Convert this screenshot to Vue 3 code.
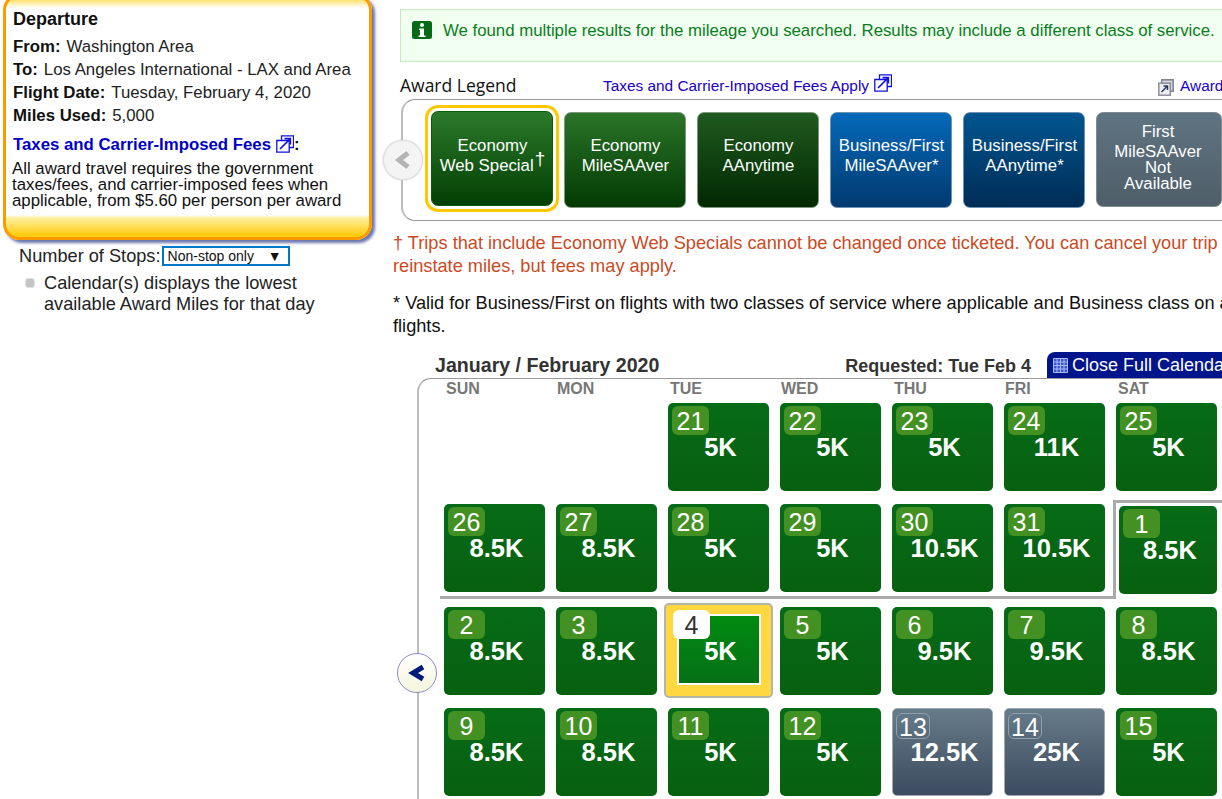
<script setup>
const days = ['SUN', 'MON', 'TUE', 'WED', 'THU', 'FRI', 'SAT']
const weeks = [
  [null, null, ['21', '5K'], ['22', '5K'], ['23', '5K'], ['24', '11K'], ['25', '5K']],
  [['26', '8.5K'], ['27', '8.5K'], ['28', '5K'], ['29', '5K'], ['30', '10.5K'], ['31', '10.5K'], ['1', '8.5K', 'shift']],
  [['2', '8.5K'], ['3', '8.5K'], ['4', '5K', 'sel'], ['5', '5K'], ['6', '9.5K'], ['7', '9.5K'], ['8', '8.5K']],
  [['9', '8.5K'], ['10', '8.5K'], ['11', '5K'], ['12', '5K'], ['13', '12.5K', 'na'], ['14', '25K', 'na'], ['15', '5K']]
]
const tiles = [
  { cls: 't1', a: 'Economy', b: 'Web Special', dag: true },
  { cls: 't2', a: 'Economy', b: 'MileSAAver' },
  { cls: 't3', a: 'Economy', b: 'AAnytime' },
  { cls: 't4', a: 'Business/First', b: 'MileSAAver*' },
  { cls: 't5', a: 'Business/First', b: 'AAnytime*' }
]
</script>

<template>
  <div class="page">
    <aside class="side">
      <section class="card">
        <h2 class="card-title">Departure</h2>
        <p class="row"><b>From:</b><span>Washington Area</span></p>
        <p class="row"><b>To:</b><span>Los Angeles International - LAX and Area</span></p>
        <p class="row"><b>Flight Date:</b><span>Tuesday, February 4, 2020</span></p>
        <p class="row"><b>Miles Used:</b><span>5,000</span></p>
        <p class="fees-link">
          <a>Taxes and Carrier-Imposed Fees</a>
          <svg class="ext" viewBox="0 0 18 18" width="18" height="18"><path d="M5.5 5V.8h12v11.7h-4.2M.8 5.5h12.4v11.7H.8z" fill="none" stroke="#1010e0" stroke-width="1.3"/><path d="M4 14 14 4M8.5 3.7h5.8v5.8" fill="none" stroke="#1010e0" stroke-width="1.7"/></svg><b>:</b>
        </p>
        <p class="fees-text">All award travel requires the government taxes/fees, and carrier-imposed fees when applicable, from $5.60 per person per award</p>
      </section>
      <div class="stops">
        <span>Number of Stops:</span>
        <div class="select"><span>Non-stop only</span><i>▼</i></div>
      </div>
      <div class="note">
        <span class="bullet"></span>
        <p>Calendar(s) displays the lowest available Award Miles for that day</p>
      </div>
    </aside>

    <main class="main">
      <div class="alert">
        <svg class="info" viewBox="0 0 20 18" width="20" height="18"><rect width="20" height="18" rx="2.5" fill="#056b16"/><circle cx="10" cy="4" r="2" fill="#fff"/><path d="M7 7.5h5v7h1.5V16h-7v-1.5H8V9H7z" fill="#fff"/></svg>
        <span>We found multiple results for the mileage you searched. Results may include a different class of service.</span>
      </div>

      <div class="legend-head">
        <h3>Award Legend</h3>
        <a class="tax-link">Taxes and Carrier-Imposed Fees Apply</a>
        <svg class="ext ext2" viewBox="0 0 18 18" width="18" height="18"><path d="M5.5 5V.8h12v11.7h-4.2M.8 5.5h12.4v11.7H.8z" fill="none" stroke="#1010e0" stroke-width="1.3"/><path d="M4 14 14 4M8.5 3.7h5.8v5.8" fill="none" stroke="#1010e0" stroke-width="1.7"/></svg>
        <svg class="doc" viewBox="0 0 16 17" width="16" height="17"><rect x="3.7" y=".8" width="11.5" height="11.5" fill="#cfd3db" stroke="#7c828c" stroke-width="1.5"/><rect x=".8" y="4.2" width="11.5" height="12" fill="#eceef2" stroke="#8a8f99" stroke-width="1.5"/><path d="M3.5 13 9 7.5M5.5 7H9.5V11" fill="none" stroke="#2c3a5c" stroke-width="1.5"/></svg>
        <a class="award-link">Award Chart</a>
      </div>

      <div class="legend">
        <button class="round grey-round" aria-label="Previous">
          <svg viewBox="0 0 18 20" width="18" height="20"><path d="M14 3 5 10l9 7" fill="none" stroke="#b4b4b4" stroke-width="5"/></svg>
        </button>
        <div v-for="t in tiles" :key="t.cls + t.b" class="tile" :class="t.cls">
          <span>{{ t.a }}</span>
          <span>{{ t.b }}<sup v-if="t.dag">†</sup></span>
        </div>
        <div class="tile t6">
          <span>First</span>
          <span>MileSAAver</span>
          <span class="tight first-tight">Not</span>
          <span class="tight">Available</span>
        </div>
      </div>

      <p class="warn">† Trips that include Economy Web Specials cannot be changed once ticketed. You can cancel your trip to reinstate miles, but fees may apply.</p>
      <p class="valid">* Valid for Business/First on flights with two classes of service where applicable and Business class on all flights.</p>

      <div class="cal-head">
        <h3>January / February 2020</h3>
        <strong>Requested: Tue Feb 4</strong>
        <div class="close-cal">
          <svg viewBox="0 0 15 15" width="15" height="15"><path d="M.5.5h14v14H.5zM4 .5v14M7.5.5v14M11 .5v14M.5 4h14M.5 7.5h14M.5 11h14" fill="#3a55c8" stroke="#a8bcf4"/></svg>
          <span>Close Full Calendar</span>
        </div>
      </div>

      <div class="cal">
        <button class="round blue-round" aria-label="Previous month">
          <svg viewBox="0 0 18 20" width="18" height="20"><path d="M15 4 5 10l10 6" fill="none" stroke="#001a7a" stroke-width="5"/></svg>
        </button>
        <div class="month-a"></div>
        <div class="month-b"></div>
        <div class="dow"><span v-for="d in days" :key="d">{{ d }}</span></div>
        <div v-for="(w, i) in weeks" :key="i" class="week">
          <template v-for="(c, j) in w" :key="j">
            <div v-if="c" class="cell" :class="c[2]">
              <span class="num">{{ c[0] }}</span>
              <span class="miles">{{ c[1] }}</span>
            </div>
            <div v-else class="empty"></div>
          </template>
        </div>
      </div>
    </main>
  </div>
</template>

<style scoped>
.page { display: flex; width: 1222px; height: 799px; overflow: hidden; background: #fff; font-family: "Liberation Sans", Arial, sans-serif; font-size: 16.8px; color: #222; }
p, h2, h3 { margin: 0; }
.side { flex: none; width: 393px; }
.card { box-sizing: border-box; width: 369px; height: 246px; margin: -6px 0 0 3px; padding: 12px 10px 0 7px; border: 3px solid #ff9900; border-radius: 16px; box-shadow: 3px 3px 3px #6c76ae; background: linear-gradient(#ffd83a 0, #fff 11px, #fff 218px, #fff0a0 221px, #ffcc10 238px); }
.card-title { font-size: 18px; font-weight: bold; line-height: 20px; color: #111; margin-bottom: 6px; }
.row { display: flex; gap: 6px; line-height: 23px; color: #222; white-space: nowrap; }
.row b { color: #111; }
.fees-link { display: flex; align-items: center; margin-top: 6px; height: 24px; color: #111; font-weight: bold; white-space: nowrap; }
.fees-link a { color: #0000c8; }
.fees-link .ext { margin: -3px 0 0 5px; }
.fees-text { margin: 4px 0 0 -1px; line-height: 16px; color: #111; width: 345px; }
.stops { display: flex; align-items: center; gap: 1px; margin: 5px 0 0 19px; height: 22px; font-size: 18.2px; white-space: nowrap; }
.select { box-sizing: border-box; display: flex; justify-content: space-between; align-items: center; width: 128px; height: 20px; padding: 0 6px 0 4px; border: 2px solid #0078c8; font-size: 14px; color: #111; }
.select i { font-style: normal; font-size: 14px; }
.note { display: flex; gap: 9px; margin: 6px 0 0 25px; font-size: 18.2px; line-height: 21px; }
.bullet { flex: none; width: 10px; height: 10px; margin-top: 5px; border-radius: 3px; background: #c4c4c4; border: 1px solid #e0e0e0; box-sizing: border-box; }
.note p { width: 290px; }

.main { flex: none; width: 860px; }
.alert { box-sizing: border-box; display: flex; gap: 11px; align-items: flex-start; width: 860px; height: 53px; margin: 9px 0 0 7px; padding: 11px 0 0 11px; background: #f0fff0; border: 1px solid #c7e9c0; color: #0a7d22; white-space: nowrap; }
.alert span { line-height: 20px; }
.legend-head { display: flex; align-items: flex-end; height: 36px; margin: 0 0 1px 7px; white-space: nowrap; }
.legend-head > * { flex: none; }
.legend-head h3 { width: 203px; font: 400 17.5px/26px "Open Sans", sans-serif; color: #111; }
.tax-link { font-size: 15.4px; line-height: 24px; color: #1a00c8; }
.ext2 { margin: 0 0 6px 5px; }
.doc { margin: 0 0 2px 266px; }
.award-link { margin-left: 6px; font-size: 15.4px; line-height: 24px; color: #1a00c8; }
.legend { box-sizing: border-box; position: relative; display: flex; gap: 11px; align-items: flex-start; width: 860px; height: 122px; margin-left: 8px; padding: 12px 0 0 28px; border: 1px solid #999; border-left: 2px solid #bbb; border-radius: 14px 0 0 14px; }
.tile { box-sizing: border-box; flex: none; display: flex; flex-direction: column; align-items: center; width: 122px; height: 96px; padding: 23px 0 0 1px; border-radius: 7px; border: 1px solid #7d967d; color: #fff; text-align: center; line-height: 20px; }
.t1 { margin-top: -1px; height: 95px; padding-top: 24px; border-color: #0c5e0c; background: linear-gradient(#2b7a2b, #033f03); box-shadow: 0 0 0 3px #fff, 0 0 0 6px #ffc800; border-radius: 7px; }
.t2 { background: linear-gradient(#2a7428, #033a03); }
.t3 { background: linear-gradient(#1f5a1f, #022802); }
.t4 { background: linear-gradient(#0469b9, #013a70); border-color: #6f93b4; }
.t5 { background: linear-gradient(#00558f, #002d56); border-color: #6f93b4; }
.t6 { width: 126px; height: 95px; padding: 9px 2px 0 0; background: linear-gradient(#5f7481, #4f5e69); border-color: #7f8c95; }
.t6 .tight { line-height: 16px; }
.t6 .first-tight { margin-top: -2px; }
sup { font-size: 19px; line-height: 0; vertical-align: 6px; margin-left: 1px; }
.round { position: absolute; display: flex; align-items: center; justify-content: center; padding: 0; box-sizing: border-box; width: 40px; height: 40px; border-radius: 50%; }
.grey-round { left: -20px; top: 40px; background: #f4f4f4; border: 1px solid #ddd; box-shadow: 0 0 2px #ccc; }
.warn { width: 855px; margin-top: 11px; font-size: 18.2px; line-height: 23px; color: #cb4a1f; }
.valid { width: 855px; margin-top: 14px; font-size: 18.2px; line-height: 23px; color: #111; }
.cal-head { display: flex; align-items: flex-end; width: 860px; height: 26px; margin-top: 14px; padding-left: 42px; box-sizing: border-box; white-space: nowrap; }
.cal-head h3 { font-size: 19.6px; line-height: 25px; color: #333; }
.cal-head strong { margin-left: auto; font-size: 18px; line-height: 24px; color: #333; }
.close-cal { box-sizing: border-box; display: flex; gap: 4px; align-items: center; flex: none; width: 206px; height: 26px; margin-left: 16px; padding-left: 6px; background: #00148c; color: #fff; font-size: 18px; border-radius: 8px 0 0 0; }
.cal { box-sizing: border-box; position: relative; width: 843px; height: 440px; margin-left: 24px; padding-left: 25px; border-top: 1px solid #999; border-left: 2px solid #bbb; border-radius: 14px 0 0 0; }
.blue-round { left: -22px; top: 274px; width: 40px; background: linear-gradient(#fff, #f5f5dc); border: 1px solid #8c8cc8; }
.dow { display: grid; grid-template-columns: repeat(7, 101px); column-gap: 11px; height: 24px; padding-left: 2px; font-size: 16px; font-weight: bold; line-height: 20px; color: #777; }
.dow span:nth-child(even) { margin-left: -1px; }
.week { display: grid; grid-template-columns: repeat(7, 101px); column-gap: 11px; margin-bottom: 13px; }
.cell { position: relative; box-sizing: border-box; height: 88px; padding-top: 3px; border-radius: 5px; background: linear-gradient(#066b17, #07600f); color: #fff; }
.num { display: block; box-sizing: border-box; width: 37px; height: 29px; margin-left: 4px; border-radius: 6px; background: #439122; font-size: 25px; line-height: 31px; text-align: center; }
.miles { display: block; margin-top: -1px; padding-left: 4px; font-size: 25.5px; line-height: 27px; font-weight: bold; text-align: center; }
.shift { margin: 2px 0 0 3px; }
.sel { margin: -4px -4px -4px -4px; height: 95px; padding-top: 33px; background: #ffd740; border: 2px solid #b5b5a5; border-radius: 5px; z-index: 1; }
.sel::before { content: ""; position: absolute; left: 11px; top: 9px; right: 10px; bottom: 11px; border: 2px solid #fff; background: linear-gradient(#008a10, #067016); }
.sel .num { position: absolute; left: 7px; top: 5px; margin: 0; background: #fff; color: #333; }
.sel .miles { position: relative; margin-top: 0; }
.na { background: linear-gradient(#667b89, #3c4b5f); border: 1px solid #a0a8b0; padding-top: 4px; }
.na .num { width: 34px; height: 26px; margin-left: 3px; background: transparent; border: 1px solid #8f9fab; line-height: 26px; }
.na .miles { margin-top: 0; }
.month-a { position: absolute; left: 21px; top: 121px; width: 673px; height: 96px; border-right: 3px solid #aaa; border-bottom: 3px solid #aaa; }
.month-b { position: absolute; left: 694px; top: 121px; width: 140px; border-top: 3px solid #aaa; }
</style>
